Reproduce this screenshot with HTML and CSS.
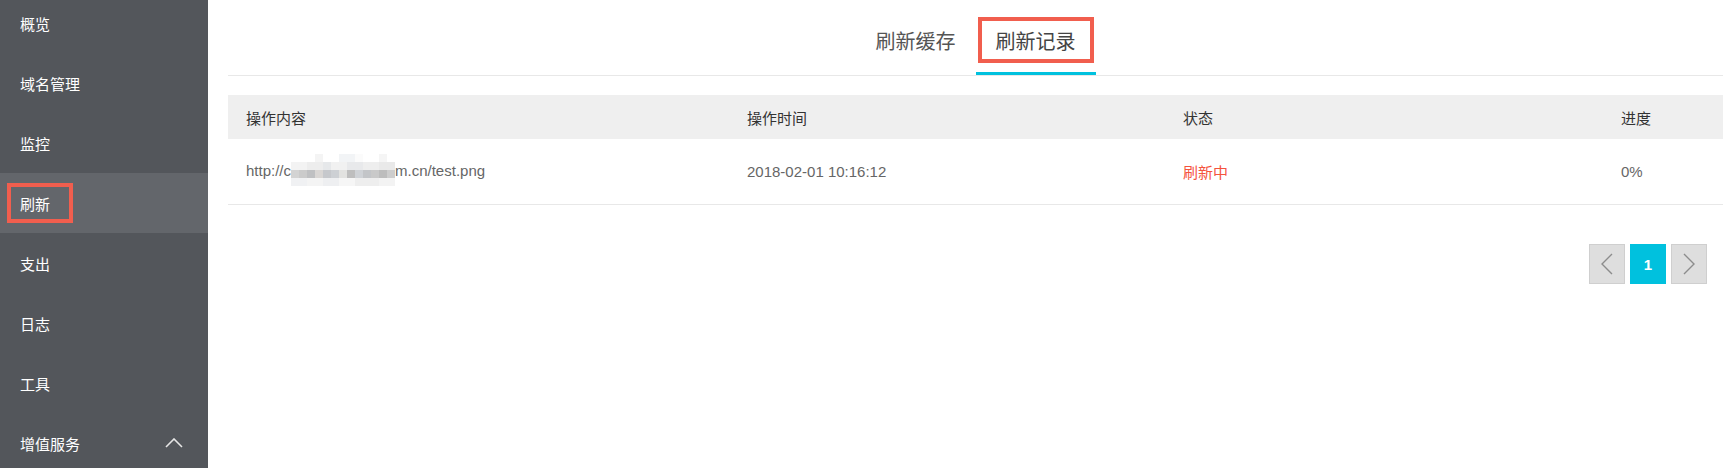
FILE: index.html
```html
<!DOCTYPE html>
<html lang="zh-CN">
<head>
    <meta charset="UTF-8">
    <meta name="viewport" content="width=device-width, initial-scale=1.0">
    <title>刷新记录</title>
    <link rel="stylesheet" href="styles.css">
</head>
<body>
    <div class="layout">
        <div class="sidebar">
            <ul class="menu">
                <li>概览</li>
                <li>域名管理</li>
                <li>监控</li>
                <li class="active"><span class="mark"></span>刷新</li>
                <li>支出</li>
                <li>日志</li>
                <li>工具</li>
                <li class="group">增值服务
                    <svg class="caret" width="18" height="10" viewBox="0 0 18 10">
                        <polyline points="1,9 9,1 17,9" fill="none" stroke="#e6e6e6" stroke-width="1.6"/>
                    </svg>
                </li>
            </ul>
        </div>

        <div class="main">
            <div class="tabs">
                <div class="tab">刷新缓存</div>
                <div class="tab current"><span class="mark"></span>刷新记录</div>
            </div>

            <div class="table">
                <div class="row head">
                    <div class="cell">操作内容</div>
                    <div class="cell">操作时间</div>
                    <div class="cell">状态</div>
                    <div class="cell">进度</div>
                </div>
                <div class="row">
                    <div class="cell">http://c<span class="mosaic"><i class="m1"></i><i class="m2"></i><i class="m3"></i><i class="m4"></i></span>m.cn/test.png</div>
                    <div class="cell">2018-02-01 10:16:12</div>
                    <div class="cell status">刷新中</div>
                    <div class="cell">0%</div>
                </div>
            </div>

            <div class="pager">
                <button class="page">
                    <svg width="12" height="22" viewBox="0 0 12 22"><polyline points="11,1 1,11 11,21" fill="none" stroke="#8c8c8c" stroke-width="1.4"/></svg>
                </button>
                <button class="page on">1</button>
                <button class="page">
                    <svg width="12" height="22" viewBox="0 0 12 22"><polyline points="1,1 11,11 1,21" fill="none" stroke="#8c8c8c" stroke-width="1.4"/></svg>
                </button>
            </div>
        </div>
    </div>
</body>
</html>
```

FILE: styles.css
```css
body {
    margin: 0;
    font-family: "Liberation Sans", "Noto Sans CJK SC", sans-serif;
    background-color: #fff;
    overflow: hidden;
}
.layout {
    display: flex;
    height: 468px;
}
.sidebar {
    width: 208px;
    flex-shrink: 0;
    background-color: #53565b;
    overflow: hidden;
}
.menu {
    list-style: none;
    margin: -7px 0 0 0;
    padding: 0;
}
.menu li {
    position: relative;
    display: flex;
    align-items: center;
    height: 60px;
    padding: 0 20px;
    color: #fff;
    font-size: 15px;
}
.menu li.active {
    background-color: #63666b;
}
.menu li .mark {
    position: absolute;
    left: 7px;
    top: 10px;
    width: 58px;
    height: 32px;
    border: 4px solid #f15e4e;
}
.menu li.group {
    justify-content: space-between;
    padding-right: 25px;
}
.caret {
    display: block;
}
.main {
    flex: 1;
    padding-left: 20px;
    min-width: 0;
}
.tabs {
    display: flex;
    justify-content: center;
    height: 75px;
    border-bottom: 1px solid #e8e8e8;
}
.tab {
    position: relative;
    margin-top: 22px;
    padding: 0 20px 10px;
    line-height: 40px;
    font-size: 20px;
    color: #555;
    border-bottom: 3px solid transparent;
}
.tab.current {
    color: #444;
    border-bottom-color: #00c1de;
}
.tab .mark {
    position: absolute;
    left: 2px;
    top: -5px;
    width: 108px;
    height: 38px;
    border: 4px solid #f15e4e;
}
.table {
    margin-top: 19px;
}
.row {
    display: grid;
    grid-template-columns: 501px 436px 438px 1fr;
    height: 65px;
    align-items: center;
    border-bottom: 1px solid #e8e8e8;
    font-size: 15px;
    color: #666;
}
.row.head {
    height: 44px;
    background-color: #efefef;
    border-bottom: none;
    color: #333;
}
.cell {
    padding-left: 18px;
    white-space: nowrap;
}
.cell.status {
    color: #f5533d;
}
.mosaic {
    display: inline-flex;
    flex-direction: column;
    vertical-align: middle;
    width: 104px;
    height: 32px;
    margin-top: -4px;
}
.mosaic i {
    display: block;
    height: 8px;
}
.mosaic .m1 {
    background: linear-gradient(to right, #fff 0 24px, #f4f4f4 24px 32px, #fff 32px 48px, #f2f4f6 48px 64px, #fbfbfb 64px 72px, #fff 72px 88px, #f5f5f5 88px 96px, #fff 96px);
}
.mosaic .m2 {
    background: linear-gradient(to right, #f3f3f3 0 16px, #ededed 16px 32px, #e6e8ea 32px 40px, #f1f1f1 40px 56px, #e8e9eb 56px 72px, #eeeeee 72px 88px, #e9e9e9 88px 104px);
}
.mosaic .m3 {
    background: linear-gradient(to right, #d3d3d3 0 8px, #cbcbcb 8px 16px, #bfc0c2 16px 24px, #d9d6d4 24px 32px, #c6c8cc 32px 40px, #cdd0d4 40px 48px, #e2e2e0 48px 56px, #bebebe 56px 64px, #cfd2d6 64px 72px, #c3c5c8 72px 80px, #c9c9c9 80px 88px, #bdbdbd 88px 96px, #cdcdcd 96px 104px);
}
.mosaic .m4 {
    background: linear-gradient(to right, #f0f1f3 0 16px, #f4f4f4 16px 32px, #eeeff1 32px 48px, #f6f6f6 48px 64px, #eeeeee 64px 88px, #f3f3f3 88px 104px);
}
.pager {
    display: flex;
    justify-content: flex-end;
    gap: 5px;
    margin-top: 39px;
    padding-right: 16px;
}
.page {
    display: flex;
    align-items: center;
    justify-content: center;
    width: 36px;
    height: 40px;
    padding: 0;
    border: 1px solid #cfcfcf;
    background-color: #dedede;
    font-family: "Liberation Sans", sans-serif;
    font-size: 15px;
    color: #fff;
}
.page.on {
    border-color: #00c1de;
    background-color: #00c1de;
    font-weight: bold;
}
```
